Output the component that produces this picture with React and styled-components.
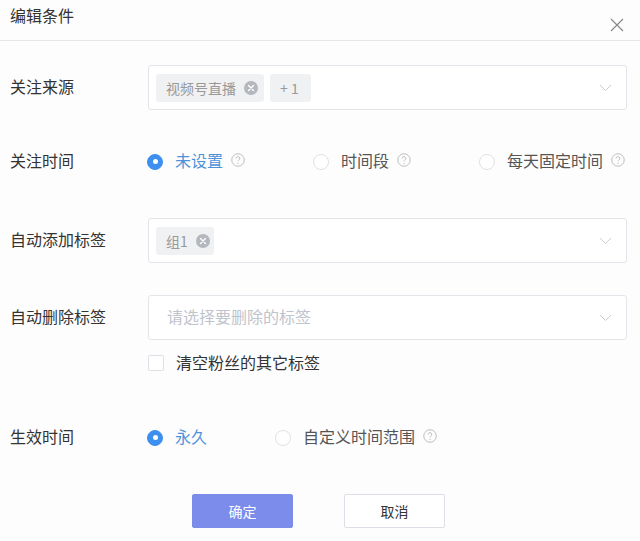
import React from "react";
import styled, { createGlobalStyle } from "styled-components";

const GlobalStyle = createGlobalStyle`
  html, body {
    margin: 0;
    padding: 0;
    background: #fdfdfd;
    font-family: "Noto Sans CJK SC", "Noto Sans", sans-serif;
    color: #333;
  }
`;

const Dialog = styled.div`
  width: 640px;
  height: 541px;
  background: #fdfdfd;
  display: flex;
  flex-direction: column;
`;

const Header = styled.div`
  height: 41px;
  box-sizing: border-box;
  border-bottom: 1px solid #e6e6e6;
  display: flex;
  justify-content: space-between;
  padding: 0 16px 0 10px;
`;

const Title = styled.div`
  font-size: 16px;
  line-height: 30px;
  color: #333;
`;

const CloseBtn = styled.div`
  width: 14px;
  height: 14px;
  margin-top: 18px;
  display: flex;
`;

const Form = styled.div`
  display: flex;
  flex-direction: column;
  padding: 24px 13px 0 10px;
`;

const Row = styled.div`
  display: flex;
  align-items: center;
  height: ${(p) => p.h || 45}px;
  margin-bottom: ${(p) => p.mb || 0}px;
`;

const Label = styled.div`
  width: 138px;
  flex-shrink: 0;
  font-size: 16px;
  line-height: 20px;
  margin-top: -3px;
  color: #333;
`;

const Select = styled.div`
  flex: 1;
  height: 45px;
  box-sizing: border-box;
  border: 1px solid #e3e5ea;
  border-radius: 3px;
  background: #fff;
  display: flex;
  align-items: center;
  padding: 0 14px 0 7px;
  gap: 6px;
`;

const Tag = styled.div`
  height: 28px;
  box-sizing: border-box;
  background: #f0f1f3;
  border-radius: 3px;
  display: flex;
  align-items: center;
  gap: 8px;
  padding: 0 ${(p) => p.pr || 6}px 0 10px;
  font-size: 14px;
  color: #999;
`;

const Placeholder = styled.div`
  font-size: 16px;
  line-height: 20px;
  margin-bottom: 3px;
  color: #c0c4cc;
  padding-left: 11px;
`;

const Chevron = styled.div`
  margin-left: auto;
  display: flex;
`;

const RadioGroup = styled.div`
  display: flex;
  align-items: center;
  margin-left: -1px;
`;

const RadioItem = styled.div`
  display: flex;
  align-items: center;
  flex-shrink: 0;
  white-space: nowrap;
  width: ${(p) => (p.w ? `${p.w}px` : "auto")};
  font-size: 16px;
  color: ${(p) => (p.checked ? "#4d93d9" : "#555")};
`;

const ItemText = styled.span`
  line-height: 20px;
  margin-bottom: 3px;
`;

const RadioDot = styled.span`
  width: 16px;
  height: 16px;
  box-sizing: border-box;
  border-radius: 50%;
  border: 1px solid ${(p) => (p.checked ? "#3d8ff0" : "#dfe1e6")};
  background: ${(p) => (p.checked ? "#3d8ff0" : "#fff")};
  display: flex;
  align-items: center;
  justify-content: center;
  margin-right: 12px;
  &::after {
    content: "";
    width: 5px;
    height: 5px;
    border-radius: 50%;
    background: #fff;
    display: ${(p) => (p.checked ? "block" : "none")};
  }
`;

const Help = styled.span`
  display: flex;
  margin-left: 8px;
  margin-bottom: 3px;
`;

const CheckRow = styled.div`
  display: flex;
  align-items: center;
  margin-left: 138px;
  height: 16px;
  margin-top: 15px;
  margin-bottom: 44px;
  font-size: 16px;
  color: #333;
`;

const CheckBox = styled.span`
  width: 16px;
  height: 16px;
  box-sizing: border-box;
  border: 1px solid #dcdfe6;
  border-radius: 2px;
  background: #fff;
  margin-right: 12px;
`;

const Footer = styled.div`
  display: flex;
  padding-left: 182px;
  gap: 51px;
  margin-top: 34px;
`;

const Button = styled.button`
  width: 101px;
  height: 34px;
  box-sizing: border-box;
  border-radius: 2px;
  font-family: inherit;
  font-size: 14px;
  cursor: pointer;
  border: 1px solid ${(p) => (p.primary ? "#7b8ceb" : "#dcdfe6")};
  background: ${(p) => (p.primary ? "#7b8ceb" : "#fff")};
  color: ${(p) => (p.primary ? "#fff" : "#333")};
`;

const ClearIcon = () => (
  <svg width="14" height="14" viewBox="0 0 14 14">
    <circle cx="7" cy="7" r="7" fill="#b4b7bd" />
    <path d="M4.5 4.5l5 5M9.5 4.5l-5 5" stroke="#fff" strokeWidth="1.4" strokeLinecap="round" />
  </svg>
);

const ChevronIcon = () => (
  <svg width="13" height="8" viewBox="0 0 13 8">
    <path d="M1 1l5.5 5.5L12 1" fill="none" stroke="#c8ccd3" strokeWidth="1" />
  </svg>
);

const HelpIcon = () => (
  <svg width="14" height="14" viewBox="0 0 13 13">
    <circle cx="6.5" cy="6.5" r="5.8" fill="none" stroke="#b8b8b8" strokeWidth="0.85" />
    <path d="M4.8 5.1a1.7 1.7 0 1 1 2.4 1.5c-.5.3-.7.6-.7 1.2" fill="none" stroke="#b8b8b8" strokeWidth="0.85" />
    <circle cx="6.5" cy="9.6" r="0.6" fill="#b8b8b8" />
  </svg>
);

const Radio = ({ checked, w, children, help }) => (
  <RadioItem checked={checked} w={w}>
    <RadioDot checked={checked} />
    <ItemText>{children}</ItemText>
    {help && (
      <Help>
        <HelpIcon />
      </Help>
    )}
  </RadioItem>
);

export default function App() {
  return (
    <Dialog>
      <GlobalStyle />
      <Header>
        <Title>编辑条件</Title>
        <CloseBtn>
          <svg width="14" height="14" viewBox="0 0 14 14">
            <path d="M1 1l12 12M13 1L1 13" stroke="#888" strokeWidth="1.2" />
          </svg>
        </CloseBtn>
      </Header>
      <Form>
        <Row mb={29}>
          <Label>关注来源</Label>
          <Select>
            <Tag pr={6}>
              视频号直播
              <ClearIcon />
            </Tag>
            <Tag pr={12}>+ 1</Tag>
            <Chevron>
              <ChevronIcon />
            </Chevron>
          </Select>
        </Row>
        <Row mb={34}>
          <Label>关注时间</Label>
          <RadioGroup>
            <Radio checked w={166} help>
              未设置
            </Radio>
            <Radio w={166} help>
              时间段
            </Radio>
            <Radio help>每天固定时间</Radio>
          </RadioGroup>
        </Row>
        <Row mb={32}>
          <Label>自动添加标签</Label>
          <Select>
            <Tag pr={4}>
              组1
              <ClearIcon />
            </Tag>
            <Chevron>
              <ChevronIcon />
            </Chevron>
          </Select>
        </Row>
        <Row>
          <Label>自动删除标签</Label>
          <Select>
            <Placeholder>请选择要删除的标签</Placeholder>
            <Chevron>
              <ChevronIcon />
            </Chevron>
          </Select>
        </Row>
        <CheckRow>
          <CheckBox />
          <ItemText>清空粉丝的其它标签</ItemText>
        </CheckRow>
        <Row>
          <Label>生效时间</Label>
          <RadioGroup>
            <Radio checked w={128}>
              永久
            </Radio>
            <Radio w={180} help>
              自定义时间范围
            </Radio>
          </RadioGroup>
        </Row>
        <Footer>
          <Button primary>确定</Button>
          <Button>取消</Button>
        </Footer>
      </Form>
    </Dialog>
  );
}
